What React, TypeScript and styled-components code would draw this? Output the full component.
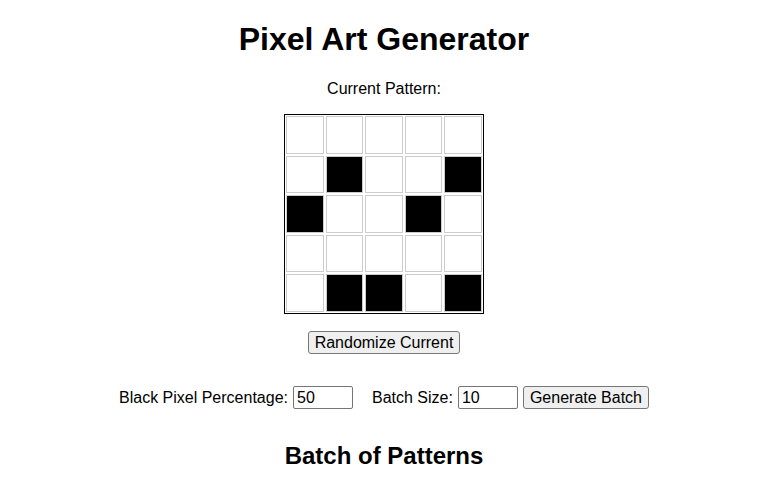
import React, { useState } from "react";
import styled, { createGlobalStyle } from "styled-components";

const Global = createGlobalStyle`
  html, body { margin: 0; padding: 0; background: #fff; }
  body { font-family: "Liberation Sans", Arial, sans-serif; color: #000; }
`;

const Page = styled.div`
  display: flex;
  flex-direction: column;
  align-items: center;
  padding-top: 21px;
`;

const Title = styled.h1`
  margin: 0;
  font-size: 32px;
  font-weight: bold;
  line-height: 37px;
`;

const Label = styled.p`
  margin: 22px 0 0;
  font-size: 16px;
  line-height: 18px;
`;

const Grid = styled.div`
  margin-top: 16px;
  width: 200px;
  height: 200px;
  box-sizing: border-box;
  border: 1px solid #000;
  padding: 1px;
  display: grid;
  grid-template-columns: repeat(5, 1fr);
  grid-template-rows: repeat(5, 1fr);
  gap: 2px;
`;

const Cell = styled.div<{ $on: boolean }>`
  border: 1px solid #ccc;
  background: ${(p) => (p.$on ? "#000" : "#fff")};
`;

const Button = styled.button`
  font-family: "Liberation Sans", Arial, sans-serif;
  font-size: 16px;
  line-height: 18px;
  height: 23px;
  padding: 1px 6px;
  background: #efefef;
  border: 1px solid #767676;
  border-radius: 3px;
  color: #000;
  box-sizing: border-box;
`;

const RandomButton = styled(Button)`
  margin-top: 17px;
`;

const Controls = styled.div`
  margin-top: 32px;
  display: flex;
  align-items: center;
  font-size: 16px;
`;

const Field = styled.label<{ $mr?: number }>`
  display: flex;
  align-items: center;
  gap: 5px;
  margin-right: ${(p) => p.$mr ?? 0}px;
`;

const Input = styled.input`
  width: 60px;
  height: 23px;
  box-sizing: border-box;
  font-family: "Liberation Sans", Arial, sans-serif;
  font-size: 16px;
  padding: 1px 3px;
  border: 1px solid #767676;
  border-radius: 2px;
  margin: 0;
`;

const Subtitle = styled.h2`
  margin: 33px 0 0;
  font-size: 24px;
  font-weight: bold;
  line-height: 28px;
`;

const initial = [
  [0, 0, 0, 0, 0],
  [0, 1, 0, 0, 1],
  [1, 0, 0, 1, 0],
  [0, 0, 0, 0, 0],
  [0, 1, 1, 0, 1],
];

export default function App() {
  const [pattern] = useState(initial);
  return (
    <Page>
      <Global />
      <Title>Pixel Art Generator</Title>
      <Label>Current Pattern:</Label>
      <Grid>
        {pattern.flat().map((v, i) => (
          <Cell key={i} $on={v === 1} />
        ))}
      </Grid>
      <RandomButton>Randomize Current</RandomButton>
      <Controls>
        <Field $mr={19}>
          Black Pixel Percentage: <Input defaultValue="50" />
        </Field>
        <Field $mr={5}>
          Batch Size: <Input defaultValue="10" />
        </Field>
        <Button>Generate Batch</Button>
      </Controls>
      <Subtitle>Batch of Patterns</Subtitle>
    </Page>
  );
}
